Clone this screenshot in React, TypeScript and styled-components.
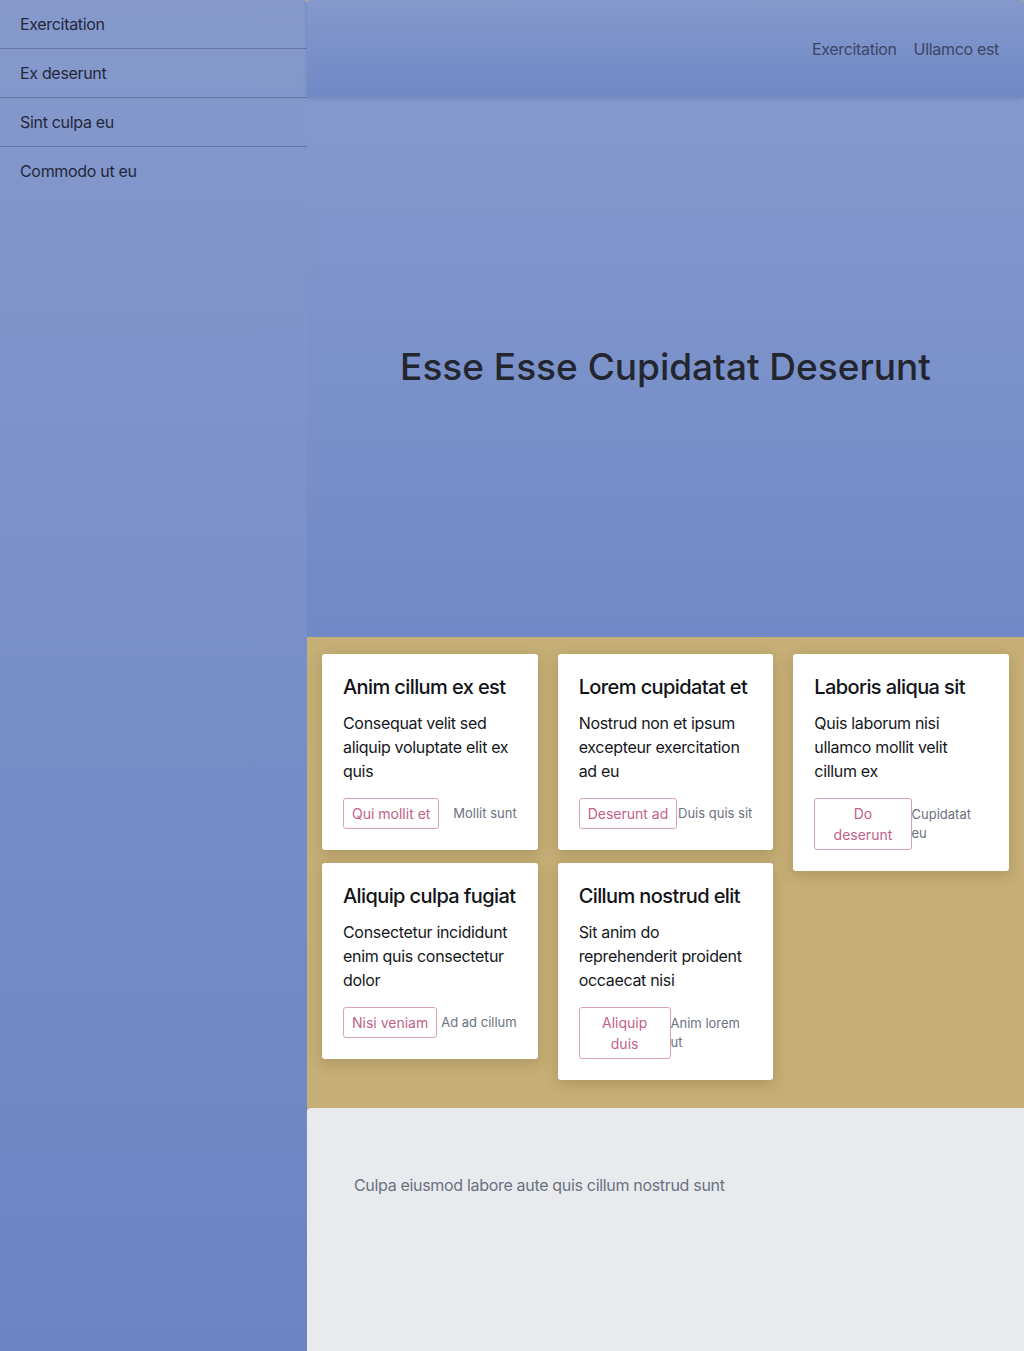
import React from "react";
import styled, { createGlobalStyle } from "styled-components";

const GlobalStyle = createGlobalStyle`
  * { box-sizing: border-box; }
  html, body { margin: 0; padding: 0; }
  body {
    background: #c6ae77;
    font-family: Inter, "Noto Sans", "Liberation Sans", sans-serif;
    color: #1f2329;
    letter-spacing: -0.02em;
  }
`;

const Layout = styled.div`
  display: grid;
  grid-template-columns: 307px 1fr;
  min-height: 1351px;
`;

const Sidebar = styled.nav`
  background: linear-gradient(180deg, #8599cc 0%, #6c84c3 100%);
  border-radius: 0 3px 0 0;
  display: flex;
  flex-direction: column;
`;

const SideItem = styled.a`
  display: block;
  padding: 12px 20px;
  font-size: 16px;
  line-height: 24px;
  color: #23283a;
  text-decoration: none;
  border-bottom: 1px solid rgba(40, 55, 100, 0.35);

  &:last-child {
    border-bottom: none;
  }
`;

const Main = styled.div`
  display: flex;
  flex-direction: column;
`;

const Header = styled.header`
  height: 97px;
  background: linear-gradient(180deg, #8599cc 0%, #7088c5 100%);
  border-radius: 3px 3px 0 0;
  box-shadow: 0 2px 4px rgba(40, 50, 90, 0.18);
  display: flex;
  align-items: center;
  justify-content: flex-end;
  gap: 17px;
  padding: 0 25px 0 0;
  position: relative;
  z-index: 1;
`;

const NavLink = styled.a`
  font-size: 16px;
  line-height: 24px;
  color: #3c4566;
  text-decoration: none;
`;

const Hero = styled.section`
  height: 540px;
  background: linear-gradient(180deg, #8599cd 0%, #7189c6 100%);
  display: flex;
  align-items: center;
  justify-content: center;
`;

const HeroTitle = styled.h1`
  margin: 0;
  font-size: 37px;
  line-height: 44px;
  font-weight: 500;
  color: #23262e;
  letter-spacing: 0;
`;

const CardSection = styled.section`
  padding: 17px 15px 49px;
  display: grid;
  grid-template-columns: repeat(3, 1fr);
  grid-auto-rows: 196px;
  column-gap: 20px;
  row-gap: 13px;
`;

const Card = styled.article`
  align-self: start;
  background: #ffffff;
  border-radius: 3px;
  box-shadow: 0 4px 14px rgba(80, 60, 20, 0.22);
  padding: 21px;
  display: flex;
  flex-direction: column;
`;

const CardTitle = styled.h3`
  margin: 0 0 12px;
  font-size: 20px;
  line-height: 24px;
  font-weight: 500;
  color: #111318;
  letter-spacing: -0.03em;
`;

const CardText = styled.p`
  margin: 0 0 15px;
  font-size: 16px;
  line-height: 24px;
  color: #15171c;
`;

const CardFooter = styled.div`
  display: flex;
  justify-content: space-between;
  align-items: center;
`;

const OutlineButton = styled.button`
  font-family: inherit;
  letter-spacing: 0;
  font-size: 14px;
  line-height: 21px;
  padding: 4px 8px;
  background: #fff;
  color: #c2618a;
  border: 1px solid #d9a3b5;
  border-radius: 3px;
  text-align: center;
`;

const Meta = styled.span`
  font-size: 13px;
  line-height: 19.5px;
  color: #6b7280;
  letter-spacing: 0;
`;

const Footer = styled.footer`
  flex: 1;
  min-height: 243px;
  background: #e9eaee;
  border-radius: 4px 0 0 0;
  padding: 65px 47px;
`;

const FooterText = styled.p`
  margin: 0;
  font-size: 16px;
  line-height: 24px;
  color: #6b7280;
`;

const sideItems = ["Exercitation", "Ex deserunt", "Sint culpa eu", "Commodo ut eu"];
const navItems = ["Exercitation", "Ullamco est"];

const cards = [
  { title: "Anim cillum ex est", text: "Consequat velit sed aliquip voluptate elit ex quis", button: "Qui mollit et", meta: "Mollit sunt" },
  { title: "Lorem cupidatat et", text: "Nostrud non et ipsum excepteur exercitation ad eu", button: "Deserunt ad", meta: "Duis quis sit" },
  { title: "Laboris aliqua sit", text: "Quis laborum nisi ullamco mollit velit cillum ex", button: "Do deserunt", meta: "Cupidatat eu" },
  { title: "Aliquip culpa fugiat", text: "Consectetur incididunt enim quis consectetur dolor", button: "Nisi veniam", meta: "Ad ad cillum" },
  { title: "Cillum nostrud elit", text: "Sit anim do reprehenderit proident occaecat nisi", button: "Aliquip duis", meta: "Anim lorem ut" },
];

export default function App() {
  return (
    <>
      <GlobalStyle />
      <Layout>
        <Sidebar>
          {sideItems.map((s) => (
            <SideItem key={s} href="#">{s}</SideItem>
          ))}
        </Sidebar>
        <Main>
          <Header>
            {navItems.map((n) => (
              <NavLink key={n} href="#">{n}</NavLink>
            ))}
          </Header>
          <Hero>
            <HeroTitle>Esse Esse Cupidatat Deserunt</HeroTitle>
          </Hero>
          <CardSection>
            {cards.map((c) => (
              <Card key={c.title}>
                <CardTitle>{c.title}</CardTitle>
                <CardText>{c.text}</CardText>
                <CardFooter>
                  <OutlineButton>{c.button}</OutlineButton>
                  <Meta>{c.meta}</Meta>
                </CardFooter>
              </Card>
            ))}
          </CardSection>
          <Footer>
            <FooterText>Culpa eiusmod labore aute quis cillum nostrud sunt</FooterText>
          </Footer>
        </Main>
      </Layout>
    </>
  );
}
